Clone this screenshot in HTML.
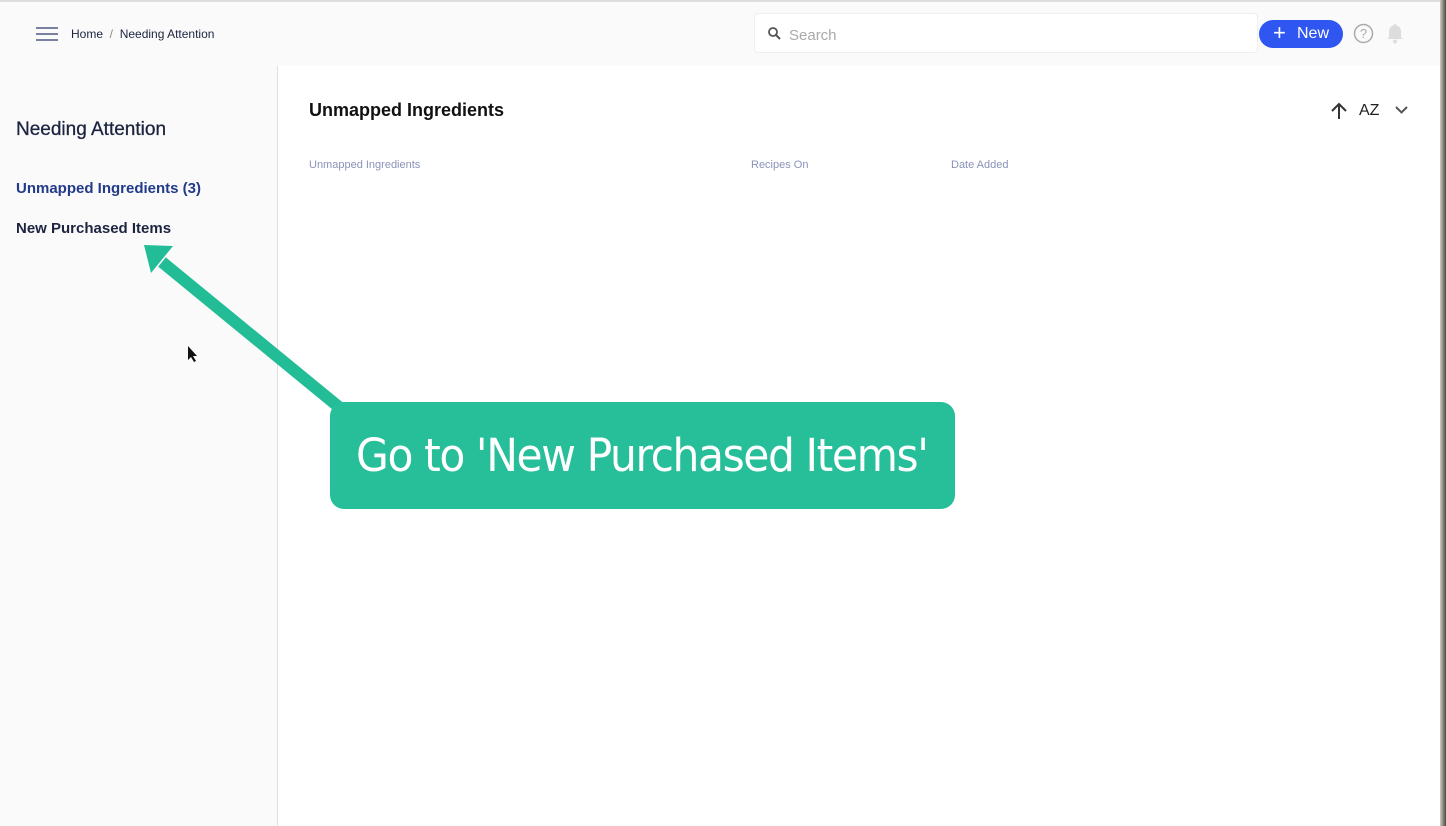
<!DOCTYPE html>
<html><head><style>
body{margin:0;width:1446px;height:826px;overflow:hidden;background:#fff;font-family:"Liberation Sans",sans-serif;position:relative}
.top{position:absolute;left:0;top:0;width:1440px;height:66px;background:#fafafa;border-top:2px solid #ddd;box-sizing:border-box}
.side{position:absolute;left:0;top:66px;width:277px;height:760px;background:#fafafa;border-right:1px solid #e6dede}
.abs{position:absolute;white-space:nowrap}
.edge{position:absolute;left:1440px;top:0;width:6px;height:826px;background:linear-gradient(90deg,#ccc,#4a4a3a)}
</style></head><body>
<div class="top"></div>
<div class="side"></div>
<div class="edge"></div>
<svg class="abs" style="left:36px;top:26px" width="22" height="16"><g stroke="#7a80a0" stroke-width="2"><line x1="0" y1="2" x2="22" y2="2"/><line x1="0" y1="8" x2="22" y2="8"/><line x1="0" y1="14" x2="22" y2="14"/></g></svg>
<div class="abs" style="left:71px;top:27px;font-size:12px;color:#1d2440">Home <span style="color:#888">&nbsp;/&nbsp;</span> Needing Attention</div>
<div class="abs" style="left:754px;top:13px;width:504px;height:40px;background:#fff;border:1px solid #eee;border-radius:4px;box-sizing:border-box"></div>
<svg class="abs" style="left:768px;top:27px" width="13" height="13"><circle cx="5" cy="5" r="4" fill="none" stroke="#555" stroke-width="1.8"/><line x1="8" y1="8" x2="12" y2="12" stroke="#555" stroke-width="2"/></svg>
<div class="abs" style="left:789px;top:27px;font-size:15px;color:#aaa">Search</div>
<div class="abs" style="left:1259px;top:20px;width:84px;height:28px;background:#2f56f0;border-radius:14px;color:#fff;font-size:16px;line-height:28px"><span style="position:absolute;left:14px;font-size:22px;top:-1px">+</span><span style="position:absolute;left:38px">New</span></div>
<svg class="abs" style="left:1353px;top:23px" width="21" height="21"><circle cx="10.5" cy="10.5" r="9" fill="none" stroke="#aaa" stroke-width="1.5"/><text x="10.5" y="15" text-anchor="middle" font-size="13" fill="#aaa" font-family="Liberation Sans">?</text></svg>
<svg class="abs" style="left:1386px;top:23px" width="18" height="21"><path d="M9 1a1.5 1.5 0 0 1 1.5 1.5C14 3.5 15 6 15 9v5l2 2H1l2-2V9c0-3 1-5.5 4.5-6.5A1.5 1.5 0 0 1 9 1z" fill="#ddd"/><circle cx="9" cy="18.5" r="2" fill="#ddd"/></svg>
<div class="abs" style="left:16px;top:119px;font-size:19px;color:#1d2440;-webkit-text-stroke:0.3px #1d2440">Needing Attention</div>
<div class="abs" style="left:16px;top:180px;font-size:15px;color:#223a8a;font-weight:bold">Unmapped Ingredients (3)</div>
<div class="abs" style="left:16px;top:220px;font-size:15px;color:#1d2440;font-weight:bold">New Purchased Items</div>
<div class="abs" style="left:309px;top:100px;font-size:18px;color:#111;font-weight:bold">Unmapped Ingredients</div>
<svg class="abs" style="left:1331px;top:102px" width="16" height="18"><path d="M8 17V2M1 9l7-7 7 7" fill="none" stroke="#333" stroke-width="2"/></svg>
<div class="abs" style="left:1359px;top:102px;font-size:16px;color:#222">AZ</div>
<svg class="abs" style="left:1395px;top:106px" width="13" height="9"><path d="M1 1l5.5 5.5L12 1" fill="none" stroke="#555" stroke-width="2"/></svg>
<div class="abs" style="left:309px;top:159px;font-size:11px;color:#8a93b8">Unmapped Ingredients</div>
<div class="abs" style="left:751px;top:159px;font-size:11px;color:#8a93b8">Recipes On</div>
<div class="abs" style="left:951px;top:159px;font-size:11px;color:#8a93b8">Date Added</div>
<svg class="abs" style="left:0;top:0" width="1446" height="826"><line x1="162" y1="262" x2="345" y2="412" stroke="#22bd97" stroke-width="12"/><polygon points="144,245 173,246 151,273" fill="#22bd97"/><path d="M188 346l0 14 3-3 3 5 2-1-3-5 4 0z" fill="#111"/></svg>
<div class="abs" style="left:330px;top:402px;width:625px;height:107px;background:#27bf99;border-radius:14px"></div>
<div class="abs" style="left:356px;top:429px;font-size:45px;color:#fff;font-family:'DejaVu Sans','Liberation Sans',sans-serif;letter-spacing:-1.5px;transform:scaleX(0.943);transform-origin:left">Go to 'New Purchased Items'</div>
</body></html>
